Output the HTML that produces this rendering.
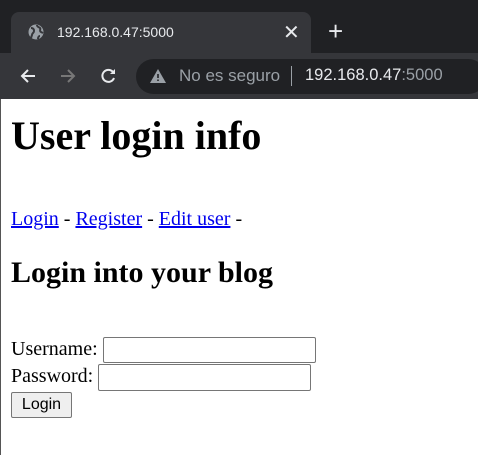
<!DOCTYPE html>
<html><head><style>
*{margin:0;padding:0;box-sizing:border-box}
body{width:478px;height:455px;overflow:hidden;background:#fff;position:relative;font-family:"Liberation Serif",serif}
.a{position:absolute;white-space:nowrap}
.ui{font-family:"Liberation Sans",sans-serif}
a{color:#0000ee}
</style></head><body>
<div class="a" style="left:0;top:0;width:478px;height:99px;background:#202124"></div>
<div class="a" style="left:11px;top:12px;width:300px;height:44px;background:#35363a;border-radius:8px 8px 0 0"></div>
<div class="a" style="left:0;top:53px;width:478px;height:46px;background:#35363a"></div>
<div class="a" style="left:136px;top:59px;width:350px;height:35px;background:#202124;border-radius:18px"></div>
<svg class="a" style="left:28px;top:24px" width="16" height="16" viewBox="0 0 16 16"><circle cx="8" cy="8" r="7.5" fill="#9aa0a6"/><path d="M3 4c2 0 3 1 3 3s-2 2-2 4l-1 3M9 1c0 2 2 2 3 3s-1 3 1 4 2 1 2 1M10 15c0-2 1-3 2-3" stroke="#35363a" stroke-width="2" fill="none"/></svg>
<div class="a ui" style="left:57px;top:24px;font-size:14px;color:#e8eaed">192.168.0.47:5000</div>
<div class="a ui" style="left:283px;top:20px;font-size:20px;color:#e8eaed">✕</div>
<div class="a ui" style="left:328px;top:16px;font-size:26px;color:#e8eaed;font-weight:300">+</div>
<svg class="a" style="left:18px;top:66px" width="20" height="20" viewBox="0 0 20 20"><path d="M17 10H4M10 4l-6 6 6 6" stroke="#e8eaed" stroke-width="2" fill="none"/></svg>
<svg class="a" style="left:58px;top:66px" width="20" height="20" viewBox="0 0 20 20"><path d="M3 10h13M10 4l6 6-6 6" stroke="#777" stroke-width="2" fill="none"/></svg>
<svg class="a" style="left:99px;top:66px" width="20" height="20" viewBox="0 0 20 20"><path d="M15 12a6 6 0 1 1-1-6" stroke="#e8eaed" stroke-width="2" fill="none"/><path d="M16 3v5h-5z" fill="#e8eaed"/></svg>
<svg class="a" style="left:150px;top:69px" width="16" height="14" viewBox="0 0 16 14"><path d="M8 0L16 14H0z" fill="#9aa0a6"/><path d="M8 5v4M8 10.5v1.5" stroke="#202124" stroke-width="1.6"/></svg>
<div class="a ui" style="left:179px;top:66px;font-size:17px;color:#9aa0a6">No es seguro</div>
<div class="a" style="left:291px;top:66px;width:1px;height:20px;background:#9aa0a6"></div>
<div class="a ui" style="left:305px;top:66px;font-size:16.5px;color:#e8eaed">192.168.0.47<span style="color:#9aa0a6">:5000</span></div>
<div class="a" style="left:0;top:99px;width:1px;height:356px;background:#555"></div>
<div class="a" style="left:11px;top:112px;font-size:40px;font-weight:bold">User login info</div>
<div class="a" style="left:11px;top:208px;font-size:20px"><a href="#">Login</a> - <a href="#">Register</a> - <a href="#">Edit user</a> -</div>
<div class="a" style="left:11px;top:256px;font-size:30px;font-weight:bold">Login into your blog</div>
<div class="a" style="left:11px;top:338px;font-size:20px">Username:</div>
<div class="a" style="left:103px;top:337px;width:213px;height:26px;border:1px solid #767676;border-radius:2px"></div>
<div class="a" style="left:11px;top:365px;font-size:20px">Password:</div>
<div class="a" style="left:98px;top:364px;width:213px;height:27px;border:1px solid #767676;border-radius:2px"></div>
<div class="a ui" style="left:11px;top:392px;width:61px;height:26px;background:#efefef;border:1px solid #767676;border-radius:2px;font-size:16px;text-align:center;line-height:24px">Login</div>
</body></html>
